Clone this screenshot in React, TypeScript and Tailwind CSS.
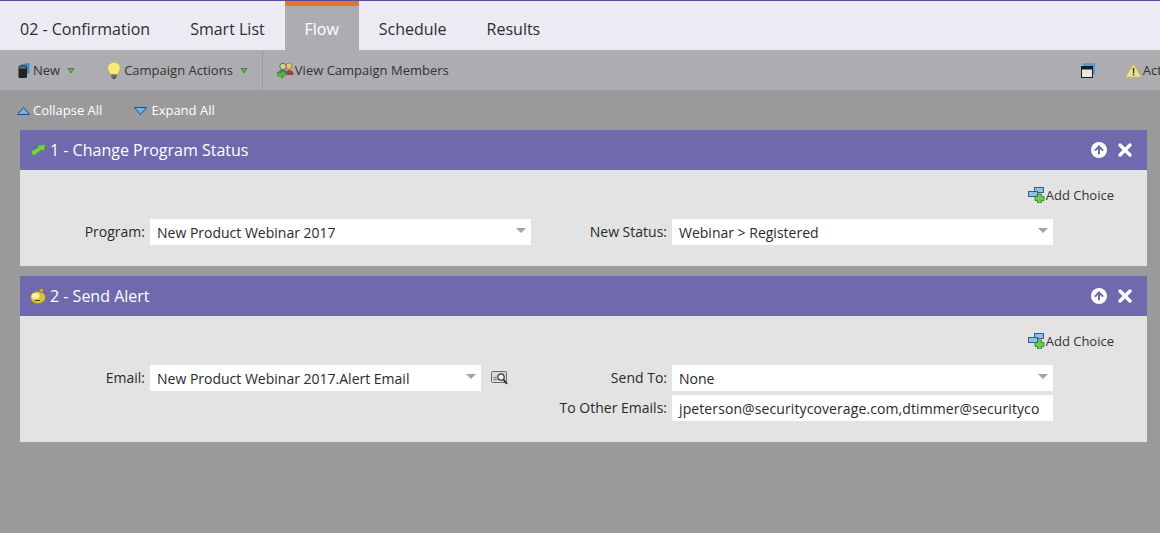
import type { ReactNode } from 'react';
import { ArrowUp, X } from 'lucide-react';

function Caret({ className }: { className: string }) {
  return (
    <svg width="8" height="6" viewBox="0 0 8 6" className={`shrink-0 ${className}`}>
      <path d="M1 0.500h6L4 5z" fill="#5fb336" stroke="#3f7f2a" strokeWidth="0.8" />
    </svg>
  );
}

function BookIcon() {
  return (
    <svg width="12" height="15" viewBox="0 0 12 15" className="shrink-0">
      <path d="M3 3V1L11.500 0V10.500H9V3z" fill="#3f8fc4" />
      <rect x="0.500" y="2.500" width="8.500" height="12.500" rx="1.500" fill="#222" />
      <rect x="1.500" y="3.500" width="6.500" height="2" fill="#777" />
    </svg>
  );
}

function BulbIcon() {
  return (
    <svg width="14" height="17" viewBox="0 0 14 17" className="shrink-0">
      <path d="M7 0.500C3.400 0.500 0.800 3 0.800 6.200c0 2.600 2.200 4 2.800 6.300h6.800c.6-2.300 2.800-3.700 2.800-6.300C13.200 3 10.600 0.500 7 0.500z" fill="#f6ea7a" stroke="#c9b84a" strokeWidth="0.7" />
      <rect x="4" y="12.500" width="6" height="3" rx="1" fill="#6b6b6b" />
      <rect x="5.500" y="15.500" width="3" height="1.300" fill="#333" />
    </svg>
  );
}

function MembersIcon() {
  return (
    <svg width="17" height="17" viewBox="0 0 17 17" className="shrink-0">
      <circle cx="12" cy="4" r="3" fill="#e8c66a" stroke="#7b6a3a" strokeWidth="0.6" />
      <path d="M8.500 13c0-3 1.500-5 3.500-5s4.500 1 4.500 4v1z" fill="#b03a3a" />
      <circle cx="6" cy="4.500" r="3.200" fill="#d9c9a0" stroke="#4b4b3a" strokeWidth="0.7" />
      <path d="M1 12c0-3 2-4.500 5-4.500s4 1.500 4 4.500z" fill="#4f6f8f" />
      <path d="M0.500 10.500h4V8l5 4.200-5 4.300v-2.500h-4z" fill="#59b53a" stroke="#2f7a2a" strokeWidth="0.6" />
    </svg>
  );
}

function WindowIcon() {
  return (
    <svg width="14" height="15" viewBox="0 0 14 15" className="shrink-0">
      <rect x="2" y="0" width="12" height="11" fill="#5a9bd0" />
      <rect x="0.500" y="3.500" width="11" height="11" fill="#e8e8e8" stroke="#1d1d1d" />
      <rect x="0.500" y="3.500" width="11" height="3" fill="#1d1d1d" />
    </svg>
  );
}

function WarningIcon() {
  return (
    <svg width="17" height="15" viewBox="0 0 16 14" className="shrink-0">
      <path d="M8 0.700L15.500 13.300H0.500z" fill="#efe39a" stroke="#bcae5e" strokeWidth="0.8" />
      <rect x="7.300" y="4.500" width="1.500" height="5" fill="#4b4520" />
      <rect x="7.300" y="10.200" width="1.500" height="1.500" fill="#4b4520" />
    </svg>
  );
}

function AddChoiceIcon() {
  return (
    <svg width="17" height="16" viewBox="0 0 17 16" className="shrink-0">
      <rect x="6.500" y="0.500" width="9" height="5" fill="#8fc0e6" stroke="#2f5f86" />
      <rect x="0.500" y="4.500" width="9" height="5" fill="#8fc0e6" stroke="#2f5f86" />
      <path d="M9.500 7h4v2.500H16v4h-2.500V16h-4v-2.500H7v-4h2.500z" fill="#6fcb55" stroke="#1f7a2a" strokeWidth="0.8" />
    </svg>
  );
}

function GreenArrowIcon() {
  return (
    <svg width="15" height="12" viewBox="0 0 15 12" className="shrink-0">
      <path d="M0.500 7L7.500 3.500 6 1.500 14.500 0.800 12.500 7.500 10.800 5.500 3.500 11.300 1 10.500z" fill="#7fd04a" stroke="#4f9a30" strokeWidth="0.7" />
    </svg>
  );
}

function BellIcon() {
  return (
    <svg width="16" height="16" viewBox="0 0 16 16" className="shrink-0">
      <ellipse cx="8" cy="9.500" rx="7.500" ry="6.200" fill="#d8c440" stroke="#8a7a24" strokeWidth="0.7" />
      <ellipse cx="5.500" cy="8" rx="4" ry="3" fill="#f6edb0" />
      <circle cx="11.500" cy="2.500" r="2" fill="#c9b43a" stroke="#7a6c20" strokeWidth="0.6" />
      <path d="M5 12.500h5" stroke="#4b4210" strokeWidth="1" />
    </svg>
  );
}

function PreviewIcon() {
  return (
    <svg width="17" height="16" viewBox="0 0 17 16" className="shrink-0">
      <rect x="0.500" y="1.500" width="15" height="11" rx="1" fill="#d9d9d9" stroke="#6b6b6b" />
      <path d="M2.500 9.500h4M2.500 7.500h3" stroke="#777" />
      <circle cx="10" cy="7" r="3.200" fill="#f2f2f2" stroke="#333" strokeWidth="1.200" />
      <path d="M12.500 9.500L16 14" stroke="#222" strokeWidth="1.600" />
    </svg>
  );
}

function Select({ value, width }: { value: string; width: string }) {
  return (
    <div className={`flex h-[26px] items-center justify-between bg-white pl-[7px] pr-[5px] ${width}`}>
      <span className="text-[14px] text-[#2a2a2a]">{value}</span>
      <svg width="10" height="5" viewBox="0 0 10 5" className="mb-[3px] shrink-0">
        <path d="M0 0h10L5 5z" fill="#a3a3a3" />
      </svg>
    </div>
  );
}

function Label({ children, width }: { children: string; width: string }) {
  return <span className={`pb-[1px] text-right text-[14px] text-[#2a2a2a] ${width}`}>{children}</span>;
}

function AddChoice() {
  return (
    <div className="flex h-4 items-center justify-end pr-[33px] text-[13px] text-[#333]">
      <AddChoiceIcon />
      <span className="ml-[1px] pt-[2px]">Add Choice</span>
    </div>
  );
}

function PanelHeader({ icon, title }: { icon: ReactNode; title: string }) {
  return (
    <div className="flex h-10 items-center justify-between bg-[#6f69ae] pl-[10px] pr-[14px] text-white">
      <div className="flex items-center gap-[4px]">
        <span className="flex w-4 justify-center">{icon}</span>
        <span className="text-[16px]">{title}</span>
      </div>
      <div className="flex items-center gap-[10px]">
        <span className="flex h-4 w-4 items-center justify-center rounded-full bg-white">
          <ArrowUp size={12} strokeWidth={4} className="text-[#6f69ae]" />
        </span>
        <X size={20} strokeWidth={4} className="-mx-[2px]" />
      </div>
    </div>
  );
}

export default function App() {
  return (
    <div className="h-[533px] w-[1160px] overflow-hidden bg-[#9a9a9c] font-['Open_Sans',sans-serif]">
      <div className="flex h-[50px] border-t border-[#5b4b9b] bg-[#ecebf3] text-[16px] text-[#2e2e2e]">
        <div className="flex items-center pl-5 pt-[6px]">02 - Confirmation</div>
        <div className="flex items-center pl-10 pt-[6px]">Smart List</div>
        <div className="ml-5 flex w-[74px] items-center justify-center border-t-[5px] border-[#e3752c] bg-[#adacb0] pt-[1px] text-white">Flow</div>
        <div className="flex items-center pl-5 pt-[6px]">Schedule</div>
        <div className="flex items-center pl-10 pt-[6px]">Results</div>
      </div>

      <div className="flex h-10 items-center overflow-hidden whitespace-nowrap bg-[#adacb0] pl-[18px] pt-[1px] text-[13px] text-[#333]">
        <BookIcon />
        <span className="ml-[3px]">New</span>
        <Caret className="ml-[7px]" />
        <span className="ml-[32px] shrink-0"><BulbIcon /></span>
        <span className="ml-[3px]">Campaign Actions</span>
        <Caret className="ml-[7px]" />
        <div className="ml-[14px] h-10 w-px shrink-0 bg-[#9b9a9e]" />
        <span className="ml-[14px] shrink-0"><MembersIcon /></span>
        <span className="ml-[1px]">View Campaign Members</span>
        <span className="ml-[632px] shrink-0"><WindowIcon /></span>
        <span className="ml-[30px] shrink-0"><WarningIcon /></span>
        <span className="ml-[1px] shrink-0">Actions</span>
      </div>

      <div className="flex h-10 items-center pl-[17px] pt-[1px] text-[13px] text-white">
        <svg width="13" height="8" viewBox="0 0 13 8" className="shrink-0">
          <path d="M6.500 0.500L12.500 7.500H0.500z" fill="#6fb4e6" stroke="#1d4f86" />
        </svg>
        <span className="ml-[3px]">Collapse All</span>
        <svg width="13" height="8" viewBox="0 0 13 8" className="ml-[32px] shrink-0">
          <path d="M0.500 0.500H12.500L6.500 7.500z" fill="#6fb4e6" stroke="#1d4f86" />
        </svg>
        <span className="ml-[4px]">Expand All</span>
      </div>

      <div className="mx-5 w-[1127px]">
        <section>
          <PanelHeader icon={<GreenArrowIcon />} title="1 - Change Program Status" />
          <div className="h-[96px] bg-[#e3e3e3] pt-[17px]">
            <AddChoice />
            <div className="mt-4 flex items-center">
              <Label width="w-[125px]">Program:</Label>
              <div className="ml-[5px]"><Select value="New Product Webinar 2017" width="w-[381px]" /></div>
              <Label width="w-[136px]">New Status:</Label>
              <div className="ml-[5px]"><Select value="Webinar > Registered" width="w-[381px]" /></div>
            </div>
          </div>
        </section>

        <section className="mt-[10px]">
          <PanelHeader icon={<BellIcon />} title="2 - Send Alert" />
          <div className="h-[126px] bg-[#e3e3e3] pt-[17px]">
            <AddChoice />
            <div className="mt-4 flex items-start">
              <div className="flex h-[26px] items-center">
                <Label width="w-[125px]">Email:</Label>
                <div className="ml-[5px]"><Select value="New Product Webinar 2017.Alert Email" width="w-[331px]" /></div>
                <span className="ml-[10px]"><PreviewIcon /></span>
              </div>
              <div className="ml-[23px] flex flex-col gap-1">
                <div className="flex items-center">
                  <Label width="w-[136px]">Send To:</Label>
                  <div className="ml-[5px]"><Select value="None" width="w-[381px]" /></div>
                </div>
                <div className="flex items-center">
                  <Label width="w-[136px]">To Other Emails:</Label>
                  <div className="ml-[5px] flex h-[26px] w-[381px] items-center overflow-hidden whitespace-nowrap bg-white pl-[7px] text-[14px] tracking-[0.1px] text-[#2a2a2a]">
                    jpeterson@securitycoverage.com,dtimmer@securityco
                  </div>
                </div>
              </div>
            </div>
          </div>
        </section>
      </div>
    </div>
  );
}
